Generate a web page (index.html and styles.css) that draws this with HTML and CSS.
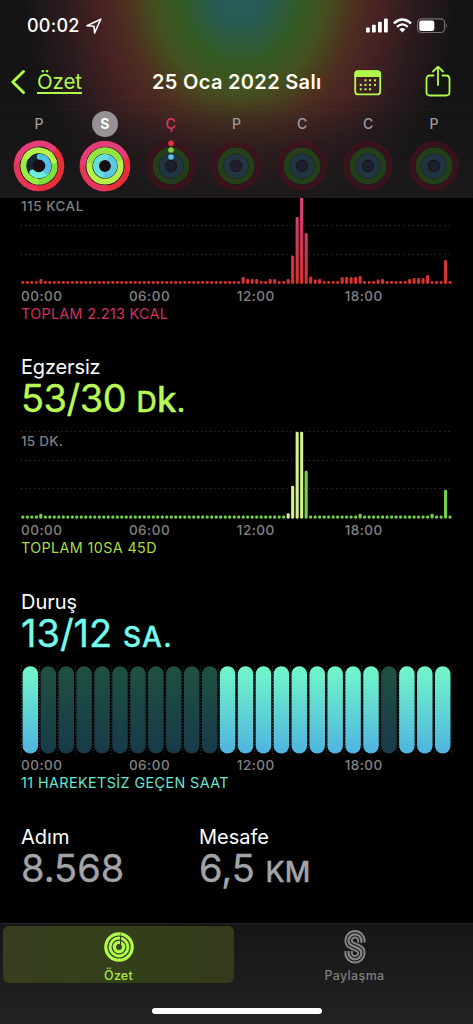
FILE: index.html
```html
<!DOCTYPE html>
<html lang="tr">
<head>
<meta charset="utf-8">
<title>Özet</title>
<link rel="stylesheet" href="styles.css">
</head>
<body>
<div class="app">
  <header class="header">
    <div class="status">
      <span class="clock">00:02</span>
      <svg class="loc" width="16" height="16" viewBox="0 0 16 16"><path d="M1 7.700 14.800 1.200 8.600 14.900 8 8.200Z" fill="none" stroke="#fff" stroke-width="1.600" stroke-linejoin="round"/></svg>
      <svg class="signals" width="84" height="16" viewBox="0 0 84 16">
        <g fill="#fff">
          <rect x="1" y="9.500" width="3.800" height="5" rx="1"/><rect x="7" y="6.800" width="3.800" height="7.700" rx="1"/><rect x="13" y="3.800" width="3.800" height="10.700" rx="1"/><rect x="19" y=".5" width="3.800" height="14" rx="1"/>
          <path d="M34.400 11.200 37.400 14.600 40.400 11.200Q37.400 8.600 34.400 11.200Z"/>
        </g>
        <g fill="none" stroke="#fff" stroke-width="2.300"><path d="M28.800 5.300Q37.400-2.400 46 5.300"/><path d="M32 8.800Q37.400 4 42.800 8.800"/></g>
        <rect x="52.600" y=".9" width="27" height="13.600" rx="4" fill="none" stroke="#77706c" stroke-width="1.200"/>
        <rect x="54.300" y="2.600" width="15" height="10.300" rx="2.200" fill="#fff"/>
        <path d="M81 5.500Q82.900 7.700 81 10Z" fill="#77706c"/>
      </svg>
    </div>
    <nav class="nav">
      <svg class="back" width="16" height="26" viewBox="0 0 16 26"><path d="M13.500 2.500 2.800 13 13.500 23.500" fill="none" stroke="#b0fb4a" stroke-width="3" stroke-linecap="round" stroke-linejoin="round"/></svg>
      <a class="back-label">Özet</a>
      <h1 class="date">25 Oca 2022 Salı</h1>
      <svg class="cal" width="28" height="26" viewBox="0 0 28 26">
        <rect x="1.200" y="1.200" width="25" height="23.200" rx="3" fill="none" stroke="#b0fb4a" stroke-width="1.800"/>
        <path d="M.5 7V4Q.5 .5 4 .5H23.500Q27 .5 27 4V7Z" fill="#b0fb4a"/>
        <g fill="#b0fb4a"><rect x="10.500" y="9.300" width="2" height="2"/><rect x="15" y="9.300" width="2" height="2"/><rect x="20" y="9.300" width="2" height="2"/><rect x="5.800" y="13.900" width="2" height="2"/><rect x="10.500" y="13.900" width="2" height="2"/><rect x="15" y="13.900" width="2" height="2"/><rect x="20" y="13.900" width="2" height="2"/><rect x="5.800" y="18.300" width="2" height="2"/><rect x="10.500" y="18.300" width="2" height="2"/><rect x="15" y="18.300" width="2" height="2"/></g>
      </svg>
      <svg class="share" width="26" height="32" viewBox="0 0 26 32"><path d="M8.500 10.500H5Q1.500 10.500 1.500 14V27Q1.500 30.500 5 30.500H21Q24.500 30.500 24.500 27V14Q24.500 10.500 21 10.500H17.500M13 20V2M8 6.500 13 1.600 18 6.500" fill="none" stroke="#b0fb4a" stroke-width="1.800" stroke-linecap="round" stroke-linejoin="round"/></svg>
    </nav>
    <div class="week" id="week"></div>
  </header>

  <main class="content">
    <section class="metric move">
      <div class="plot plot-move">
        <svg id="move" width="431" height="87"></svg>
        <span class="scale">115 KCAL</span>
      </div>
      <div class="axis"><span>00:00</span><span>06:00</span><span>12:00</span><span>18:00</span></div>
      <p class="total total-move">TOPLAM 2.213 KCAL</p>
    </section>

    <section class="metric exercise">
      <h2 class="name name-exercise">Egzersiz</h2>
      <p class="value value-exercise">53/30 <span class="unit unit-dk">D<span class="tall">k</span>.</span></p>
      <div class="plot plot-exercise">
        <svg id="exercise" width="431" height="88"></svg>
        <span class="scale scale-min">15 DK.</span>
      </div>
      <div class="axis"><span>00:00</span><span>06:00</span><span>12:00</span><span>18:00</span></div>
      <p class="total total-exercise">TOPLAM 10SA 45D</p>
    </section>

    <section class="metric stand">
      <h2 class="name name-stand">Duruş</h2>
      <p class="value value-stand">13/12 <span class="unit unit-sa">SA.</span></p>
      <div class="plot plot-stand"><svg id="stand" width="431" height="88"></svg></div>
      <div class="axis"><span>00:00</span><span>06:00</span><span>12:00</span><span>18:00</span></div>
      <p class="total total-stand">11 HAREKETSİZ GEÇEN SAAT</p>
    </section>

    <section class="stats">
      <div><h2 class="name">Adım</h2><p class="value">8.568</p></div>
      <div><h2 class="name">Mesafe</h2><p class="value">6,5 <span class="unit unit-km">KM</span></p></div>
    </section>
  </main>

  <footer class="tabs">
    <div class="tab-row">
      <div class="tab tab-on">
        <svg width="30" height="30" viewBox="0 0 30 30">
          <circle cx="15" cy="15" r="14.800" fill="#b0fb4a"/>
          <g fill="none" stroke="#35411b" stroke-width="1.200"><circle cx="15" cy="15" r="11"/><circle cx="15" cy="15" r="6.900"/></g>
          <circle cx="15" cy="15" r="2.900" fill="#35411b"/>
          <path d="M16.600 3.500V12.800" stroke="#35411b" stroke-width="1.200"/><path d="M16.600 0V3.500" stroke="#6f9432" stroke-width=".8"/>
        </svg>
        <span>Özet</span>
      </div>
      <div class="tab tab-share">
        <svg width="24" height="34" viewBox="0 0 24 34">
          <g fill="none">
            <path d="M18.400 12.500V10.700A6.400 6.400 0 0 0 5.600 10.700Q5.600 13.800 8.600 15.200L15.400 18.400Q18.400 19.800 18.400 22.900A6.400 6.400 0 0 1 5.600 22.900V21.100" stroke="#858586" stroke-width="8.400"/>
            <path d="M18.400 12.500V10.700A6.400 6.400 0 0 0 5.600 10.700Q5.600 13.800 8.600 15.200L15.400 18.400Q18.400 19.800 18.400 22.900A6.400 6.400 0 0 1 5.600 22.900V21.100" stroke="#1c1c1c" stroke-width="4.500"/>
            <path d="M18.400 12.500V10.700A6.400 6.400 0 0 0 5.600 10.700Q5.600 13.800 8.600 15.200L15.400 18.400Q18.400 19.800 18.400 22.900A6.400 6.400 0 0 1 5.600 22.900V21.100" stroke="#858586" stroke-width="2.300"/>
          </g>
        </svg>
        <span>Paylaşma</span>
      </div>
    </div>
    <div class="home"></div>
  </footer>
</div>
<script src="charts.js"></script>
</body>
</html>
```
FILE: styles.css
```css
* { box-sizing: border-box; margin: 0; padding: 0; }
body { background: #000; font-family: Inter, Roboto, "Liberation Sans", sans-serif; color: #fff; }
svg { display: block; flex: none; }
.app { width: 473px; height: 1024px; display: flex; flex-direction: column; background: #000; overflow: hidden; }

.header {
  height: 198px; flex: none;
  background:
    linear-gradient(#17161700 50%, #1a181a90 75%, #1b191be8 100%),
    radial-gradient(ellipse 215px 255px at 240px -10px, #265c60 0%, #285b50 14%, #34591f 30%, #44501f 40%, #4d3020 53%, #472223 65%, #2c1b1e 82%, #151415 100%);
}
.status { height: 52px; display: flex; align-items: flex-start; padding: 15px 24px 0 27px; }
.clock { font-size: 18px; line-height: 22px; font-weight: 500; letter-spacing: .25px; width: 56px; }
.loc { margin: 3px 0 0 3px; }
.signals { margin: 3px 0 0 auto; }
.nav { height: 57px; display: flex; align-items: center; padding: 3px 22px 0 10px; }
.back-label { font-size: 20.500px; line-height: 26px; color: #b0fb4a; width: 45px; margin-left: 11px; letter-spacing: -.1px; text-decoration: underline; text-decoration-thickness: 1.500px; text-underline-offset: 3px; white-space: nowrap; }
.date { font-size: 20px; line-height: 26px; font-weight: 600; margin-left: 70px; width: 170px; white-space: nowrap; letter-spacing: .32px; color: #fffaf0; }
.cal { margin: 1px 0 0 32px; }
.share { margin: -3px 0 0 auto; }
.week { border-top: 1px solid #ffffff06; display: grid; grid-template-columns: repeat(7, 65.830px); padding-left: 6px; height: 89px; }
.day { display: flex; flex-direction: column; align-items: center; gap: 3px; padding-top: 1px; }
.letter { width: 26px; height: 26px; border-radius: 50%; text-align: center; font-size: 14px; line-height: 26px; font-weight: 500; color: #9d989b; }
.letter-on { background: #959195; color: #fff; font-weight: 700; }
.letter-today { color: #e33463; }

.content { height: 725px; padding: 0 21px; flex: none; }
.metric { height: 159px; }
.exercise, .stand { height: 235px; }
.plot { display: grid; width: 431px; }
.plot > * { grid-area: 1 / 1; }
.plot-exercise, .plot-stand { margin-top: 12px; }
.scale { font-size: 13.500px; line-height: 16px; font-weight: 500; color: #7f7f80; letter-spacing: .5px; }
.scale-min { padding-top: 2px; letter-spacing: .25px; }
.plot-move .scale { height: 87px; }
.axis { display: grid; grid-template-columns: repeat(4, 107.900px); font-size: 13.500px; line-height: 22px; height: 22px; font-weight: 500; color: #828283; letter-spacing: .5px; }
.total { font-size: 14.300px; line-height: 14px; height: 14px; white-space: nowrap; }
.total-move { color: #d72f62; letter-spacing: .35px; }
.total-exercise { color: #a8dc46; letter-spacing: .4px; }
.total-stand { color: #65e8d2; letter-spacing: .43px; }
.name { font-size: 20px; line-height: 21px; height: 21px; font-weight: 400; white-space: nowrap; }
.name-exercise { letter-spacing: -.15px; }
.value { font-size: 38px; line-height: 41px; height: 41px; font-weight: 400; -webkit-text-stroke: .35px currentColor; white-space: nowrap; }
.value-exercise { color: #b8f956; letter-spacing: -.5px; }
.value-stand { color: #75fbea; }
.stats .value { color: #a3a3a8; }
.unit { font-size: 28px; font-weight: 500; }
.unit-dk { letter-spacing: .3px; }
.unit-sa { letter-spacing: 1.200px; }
.tall { font-size: 35px; }
.stats { display: grid; grid-template-columns: 178px 1fr; }

.tabs { height: 101px; flex: none; background: linear-gradient(#161616, #222); border-top: 1px solid #222; padding: 2px 3px 0; }
.tab-row { display: grid; grid-template-columns: 231px 1fr; }
.tab { height: 57px; padding-top: 6px; display: flex; flex-direction: column; align-items: center; color: #7f7f80; font-size: 12.500px; line-height: 16px; font-weight: 500; letter-spacing: .2px; }
.tab svg { margin-bottom: 6px; }
.tab-on { background: linear-gradient(90deg, #363e1e, #33401a 50%, #333b1a); border-radius: 6px; color: #a8e84a; }
.tab-share { padding-left: 5px; letter-spacing: .35px; }
.tab-share svg { margin: -2px 0 4px; }
.home { width: 170px; height: 6px; border-radius: 3px; background: #fff; margin: 25px auto 0; }
```
FILE: charts.js
```js
const svg = (id, html) => { document.getElementById(id).innerHTML = html; };
const step = 4.497;

function dottedRow(y) {
  return `<path d="M0 ${y}H431" stroke="#3c3c3c" stroke-width="1" stroke-dasharray="1 3.5"/>`;
}

function bars(values, bottom, fill) {
  let out = '';
  for (let i = 0; i < 96; i++) {
    const h = values[i] || 3.1;
    out += `<rect x="${(i * step + .3).toFixed(2)}" y="${bottom - h}" width="3.1" height="${h}" rx="1.4" fill="${fill(i)}"/>`;
  }
  return out;
}

const kcal = { 4: 5, 49: 7, 50: 5, 51: 5, 52: 5, 55: 5, 56: 5, 59: 5, 60: 28.5, 61: 67, 62: 90, 63: 51, 64: 7.5, 65: 4.5, 66: 5, 71: 7, 72: 7, 73: 7, 74: 7, 75: 8, 79: 4.5, 80: 5, 86: 5, 87: 6, 88: 6, 89: 6, 90: 9, 94: 24 };
svg('move', `<defs><linearGradient id="mg" gradientUnits="userSpaceOnUse" x1="0" y1="0" x2="0" y2="86"><stop stop-color="#e2407f"/><stop offset=".45" stop-color="#cf3a5c"/><stop offset="1" stop-color="#d9322e"/></linearGradient></defs>`
  + dottedRow(27.5) + dottedRow(56.5) + bars(kcal, 86, () => 'url(#mg)'));

const minutes = { 4: 5, 59: 5.5, 60: 33, 61: 87, 62: 87, 63: 48, 75: 5, 91: 5, 94: 29 };
svg('exercise', dottedRow(.5) + dottedRow(29.5) + dottedRow(57.5)
  + bars(minutes, 87.7, i => i >= 59 && i <= 62 ? '#d5f093' : '#76cf48'));

let stand = '<defs><linearGradient id="on" x1="0" y1="0" x2="0" y2="1"><stop stop-color="#72f7c9"/><stop offset="1" stop-color="#4fb4e0"/></linearGradient><linearGradient id="off" x1="0" y1="0" x2="0" y2="1"><stop stop-color="#1f5040"/><stop offset="1" stop-color="#183a4a"/></linearGradient></defs>';
for (let h = 0; h <= 24; h++) {
  const x = h * 17.93;
  stand += `<path d="M${x + .5} 0V88" stroke="#254646" stroke-width="1" stroke-dasharray="1 2"/>`;
  if (h < 24) {
    const active = h === 0 || (h >= 11 && h !== 20);
    stand += `<rect x="${x + 1.6}" y=".3" width="15.500" height="87.200" rx="7.700" fill="url(#${active ? 'on' : 'off'})"/>`;
  }
}
svg('stand', stand);

function circle(r, color, opacity = 1) {
  return `<circle cx="26" cy="26" r="${r}" fill="none" stroke="${color}" stroke-width="6" opacity="${opacity}"/>`;
}
function arc(r, from, to, color) {
  const p = a => `${(26 + r * Math.sin(a * Math.PI / 180)).toFixed(2)} ${(26 - r * Math.cos(a * Math.PI / 180)).toFixed(2)}`;
  return `<path d="M${p(from)}A${r} ${r} 0 ${to - from > 180 ? 1 : 0} 1 ${p(to)}" fill="none" stroke="${color}" stroke-width="6" stroke-linecap="round"/>`;
}
const disc = '<circle cx="26" cy="26" r="25.500" fill="#160d12"/>';
const faint = '<g opacity=".8"><circle cx="26" cy="26" r="24" fill="#151114"/>' + circle(21.8, '#46131d', .85) + circle(15.5, '#25481a') + circle(9.2, '#213c4a') + '<circle cx="26" cy="26" r="5.500" fill="#1c2030"/></g>';
const rings = [
  disc + arc(22.3, 40, 200, '#e5303c') + arc(22.3, 190, 300, '#e63558') + arc(22.3, 290, 398, '#e43d78')
    + arc(15.6, 75, 200, '#7ddf3c') + arc(15.6, 190, 320, '#98ee42') + arc(15.6, 310, 430, '#b4f44a')
    + circle(9.3, '#142733') + arc(9.3, 120, 225, '#6deedc') + arc(9.3, 5, 125, '#55bfe4'),
  disc + arc(22.3, 70, 190, '#e5303c') + arc(22.3, 180, 290, '#e63558') + arc(22.3, 280, 424, '#e43d78')
    + circle(15.6, '#b4f44a') + arc(15.6, 290, 420, '#8fe43e')
    + circle(9, '#6adfdc') + arc(9, 40, 170, '#5bc5e4'),
  faint + '<circle cx="26" cy="3.300" r="2.800" fill="#e5303c"/><circle cx="26" cy="10" r="2.800" fill="#7dd33c"/><circle cx="26" cy="17" r="2.800" fill="#5bb9ed"/>',
  faint, faint, faint, faint
];
document.getElementById('week').innerHTML = ['P', 'S', 'Ç', 'P', 'C', 'C', 'P'].map((d, i) =>
  `<div class="day"><span class="letter${i === 1 ? ' letter-on' : i === 2 ? ' letter-today' : ''}">${d}</span><svg width="52" height="52" viewBox="0 0 52 52">${rings[i]}</svg></div>`).join('');
```
